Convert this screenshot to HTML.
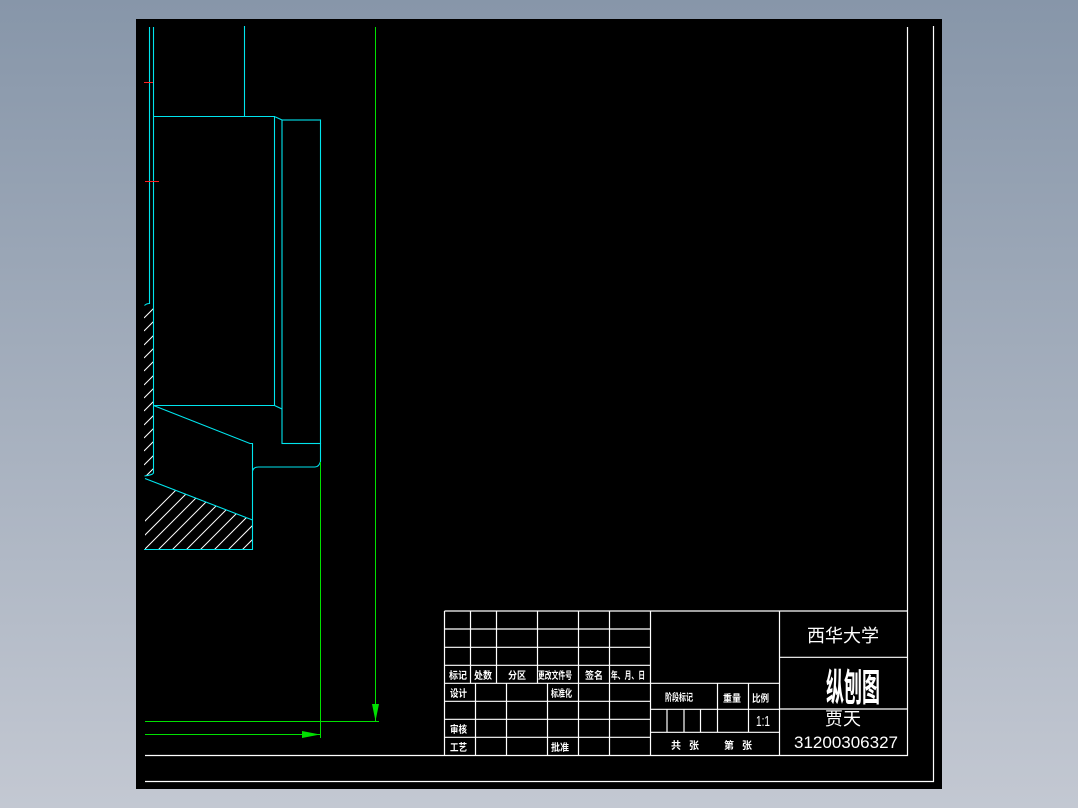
<!DOCTYPE html>
<html><head><meta charset="utf-8"><style>
html,body{margin:0;padding:0;width:1078px;height:808px;overflow:hidden;background:linear-gradient(#8796a9,#c3c8d2);}
svg{position:absolute;left:0;top:0}
.s{font-family:"Liberation Sans","Noto Sans CJK SC",sans-serif;fill:#fff;font-weight:bold;font-size:10px}
.t{font-family:"Liberation Sans","Noto Sans CJK SC",sans-serif;fill:#fff}
</style></head><body>
<svg width="1078" height="808" viewBox="0 0 1078 808">
<defs>
<clipPath id="c1"><rect x="144" y="304" width="9" height="172"/></clipPath>
<clipPath id="c2"><polygon points="145,478 252,520 252,549 145,549"/></clipPath>
</defs>
<rect x="136" y="19" width="806" height="770" fill="#000"/>
<g stroke="#fff" stroke-width="1.2" fill="none">
<path d="M907.5 27V755.5H145M933.5 26V781.5H145"/>
</g>
<g stroke="#fff" stroke-width="1" clip-path="url(#c1)">
<path d="M144 318l12-12M144 331l12-12M144 345l12-12M144 358l12-12M144 371l12-12M144 385l12-12M144 398l12-12M144 411l12-12M144 425l12-12M144 438l12-12M144 451l12-12M144 465l12-12M144 478l12-12"/>
</g>
<g stroke="#fff" stroke-width="1" clip-path="url(#c2)">
<path d="M134 560l120-120M148 560l120-120M162 560l120-120M176 560l120-120M190 560l120-120M204 560l120-120M218 560l120-120M232 560l120-120M246 560l120-120M120 560l120-120M106 560l120-120"/>
</g>
<g stroke="#00e5ee" stroke-width="1.1" fill="none">
<path d="M149.5 27V303.5q-3 0-5 2M153.5 27V473q-1 2-9 3"/>
<path d="M244.5 26V116.5M153.5 116.5H274.5V405.5H153.5M274.5 116.5L282 120M274.5 405.5L282 409"/>
<rect x="282" y="120" width="38.5" height="323.5"/>
<path d="M153.5 405.5L250 443.5H252.5V549.5H144M252.5 471q1-4 6-4H315q4 0 5.5-5.5V443"/>
<path d="M145 478.5L252.5 520"/>
</g>
<g stroke="#ff2020" stroke-width="1"><path d="M144 82.5H153M145 181.5H159"/></g>
<g stroke="#00e000" stroke-width="1" fill="none">
<path d="M320.5 462V738M145 721.5H379M375.5 27V721M145 734.5H320"/>
</g>
<polygon points="302,731 320,734.5 302,738" fill="#00e000"/>
<polygon points="372,704 375.5,721 379,704" fill="#00e000"/>
<g stroke="#fff" stroke-width="1.2" fill="none">
<path d="M444.5 611H907.5M444.5 611V755.5M650.5 611V755.5M779.5 611V755.5"/>
<path d="M444.5 629H650.5M444.5 647.3H650.5M444.5 665.3H650.5M444.5 683.3H650.5M444.5 701.3H650.5M444.5 719.3H650.5M444.5 737.3H650.5"/>
<path d="M470.5 611V683M496.5 611V683M537.5 611V683M578.5 611V683M609.5 611V683"/>
<path d="M475.5 683V755M506.5 683V755M547.5 683V755M578.5 683V755M609.5 683V755"/>
<path d="M650.5 683.3H779.5M650.5 709.3H779.5M650.5 732.3H779.5"/>
<path d="M717.5 683V732M748.5 683V732M667 709V732M684 709V732M700.5 709V732"/>
<path d="M779.5 657.3H907.5M779.5 709H907.5"/>
</g>
<g class="s">
<text x="449" y="679" textLength="18" lengthAdjust="spacingAndGlyphs">标记</text>
<text x="474" y="679" textLength="18" lengthAdjust="spacingAndGlyphs">处数</text>
<text x="508" y="679" textLength="18" lengthAdjust="spacingAndGlyphs">分区</text>
<text x="538" y="679" textLength="34" lengthAdjust="spacingAndGlyphs">更改文件号</text>
<text x="585" y="679" textLength="18" lengthAdjust="spacingAndGlyphs">签名</text>
<text x="611" y="679" textLength="34" lengthAdjust="spacingAndGlyphs">年、月、日</text>
<text x="450" y="697" textLength="17" lengthAdjust="spacingAndGlyphs">设计</text>
<text x="551" y="697" textLength="21" lengthAdjust="spacingAndGlyphs">标准化</text>
<text x="450" y="733" textLength="17" lengthAdjust="spacingAndGlyphs">审核</text>
<text x="450" y="751" textLength="17" lengthAdjust="spacingAndGlyphs">工艺</text>
<text x="551" y="751" textLength="18" lengthAdjust="spacingAndGlyphs">批准</text>
<text x="665" y="701" textLength="28" lengthAdjust="spacingAndGlyphs">阶段标记</text>
<text x="723" y="702" textLength="18" lengthAdjust="spacingAndGlyphs">重量</text>
<text x="752" y="702" textLength="17" lengthAdjust="spacingAndGlyphs">比例</text>
<text x="671" y="749">共</text><text x="689" y="749">张</text>
<text x="724" y="749">第</text><text x="742" y="749">张</text>
</g>
<text class="t" x="763" y="726" font-size="15" text-anchor="middle" textLength="14" lengthAdjust="spacingAndGlyphs">1:1</text>
<text class="t" x="843" y="642" font-size="18" text-anchor="middle">西华大学</text>
<text class="t" x="853" y="701" font-size="38" font-weight="bold" text-anchor="middle" textLength="54" lengthAdjust="spacingAndGlyphs">纵刨图</text>
<text class="t" x="843" y="725" font-size="18" text-anchor="middle">贾天</text>
<text class="t" x="846" y="748" font-size="17" text-anchor="middle" textLength="104" lengthAdjust="spacingAndGlyphs">31200306327</text>
</svg>
</body></html>
